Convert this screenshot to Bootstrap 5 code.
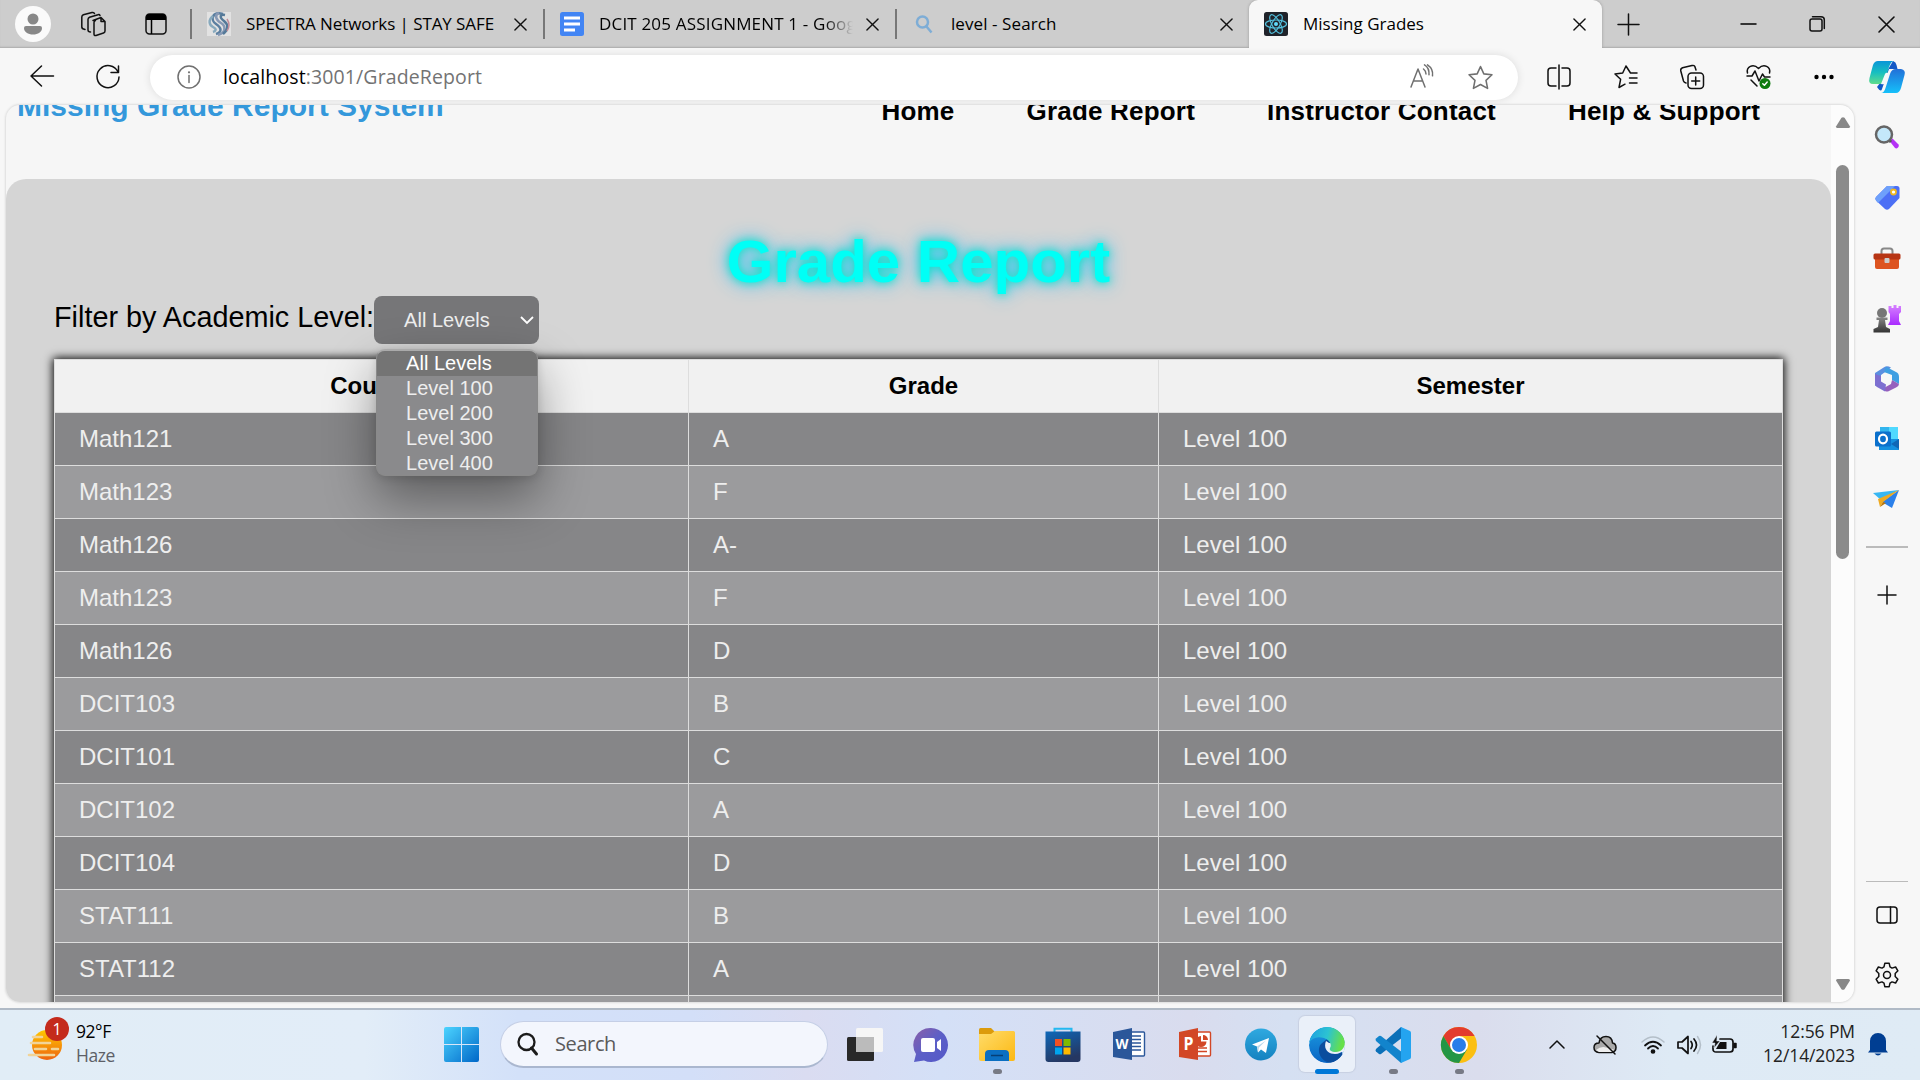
<!DOCTYPE html>
<html lang="en">
<head>
<meta charset="utf-8">
<title>Missing Grades</title>
<link href="https://cdn.jsdelivr.net/npm/bootstrap@5.3.0/dist/css/bootstrap.min.css" rel="stylesheet">
<style>
body{width:1920px;height:1080px;overflow:hidden;background:#f7f7f7;font-family:"Open Sans","Noto Sans",sans-serif;color:#000}
svg{display:block;flex:none;overflow:visible}
.ln{fill:none;stroke:#111;stroke-width:1.5;stroke-linecap:round;stroke-linejoin:round}
.g{stroke:#707070}
.tabstrip{height:48px;background:#cdcdcd;box-shadow:inset 0 -2px 2px -1px #aaa}
.avatar{width:36px;height:36px;margin:0 30px 0 15px;background:#fafafa}
.sep{width:2px;height:30px;background:#777;flex:none}
.tab{height:48px;font-size:17px;white-space:nowrap}
.tab svg:first-child{margin:0 15px 0 15px}
.tab .cap{flex:1;overflow:hidden;line-height:26px;margin-top:-1px}
.t1{width:351px;letter-spacing:-.08px}.t2{width:350px;letter-spacing:.18px}.t3{width:352px;letter-spacing:.08px}
.t4{width:353px;background:#f7f7f7;border-radius:9px 9px 0 0;letter-spacing:0;box-shadow:0 0 3px #999;clip-path:inset(0 -4px 0 -4px)}
.t1>svg:last-child,.t2>svg:last-child{margin-right:16px}.t3>svg:last-child,.t4>svg:last-child{margin-right:16px}
.fade-end{-webkit-mask-image:linear-gradient(90deg,#000 225px,transparent 254px);mask-image:linear-gradient(90deg,#000 225px,transparent 254px)}
.toolbar{height:57px}
.omni{width:1368px;height:45px;margin-top:1px;background:#fff;box-shadow:0 0 8px #0000001c;font-size:19.5px}
.omni .url{letter-spacing:.12px;margin-left:22px;flex:1;color:#737373;line-height:30px}
.view{width:1848px;height:898px;border-radius:14px;box-shadow:0 0 2px 1px #ddd;background:#f6f6f6;font-family:"Liberation Sans",Arial,sans-serif}
.doc{width:1825px;overflow:hidden}
.head{height:114px;margin-top:-40px;padding:0 71px 0 11px}
.brandname{font-size:30px;line-height:34px;color:#3498db;padding-top:24px;font-weight:700}
.menu{padding-top:32px;font-size:26px;line-height:28px;font-weight:700;letter-spacing:.2px;gap:72px}
.panel{background:#d5d5d5;border-radius:20px 20px 0 0;padding:48px 48px 0;height:900px}
.glow{font-size:60px;line-height:68px;font-weight:700;color:#00fff6;text-shadow:0 0 10px #00e6c4,0 0 20px #18b8ff;margin:0;padding-top:1px;margin-bottom:-1px}
.lvl-label{font-size:28.8px;line-height:33px;margin-top:-4px}
.picker{width:165px;height:48px;margin-top:1px;background:#767678;border-radius:8px;color:#eee;font-size:20px;padding:0 5px 0 30px;position:relative}
.drop{position:absolute;left:2px;top:53px;width:162px;height:127px;background:#8a8a8c;border:1px solid #8a8a8a;border-top:2px solid #aaa;border-radius:9px;box-shadow:0 22px 50px #0006,0 2px 8px #0002;overflow:hidden;z-index:3}
.drop div{line-height:25px;height:25px;padding-left:29px;color:#eee}
.drop .on{background:#747474;color:#fff}
.gr{width:1729px;margin-top:15px;table-layout:fixed;border-collapse:collapse;box-shadow:0 0 9px 1px #000;font-size:24px;line-height:28px;color:#eee}
.gr td,.gr th{height:53px;padding:0 24px;border:1px solid #ddd}
.gr th{background:#f1f1f1;color:#000;text-align:center}
.gr td{background:#868688}
.gr tr:nth-child(even) td{background:#9b9b9d}
.sbar{width:23px;background:#fcfcfc;border-radius:0 14px 14px 0}
.thumb{width:13px;height:394px;margin-top:37px;background:#8b8b8b;border-radius:7px}
.side{width:65px;padding-top:15px}
.side>svg{margin-bottom:24.2px}
.rule{width:42px;height:2px;background:#bbb;flex:none}
.taskbar{height:72px;border-top:2px solid #b0bac6;padding-bottom:1px;background:linear-gradient(90deg,#e1edf6 0,#e2edf8 19%,#d3e1f9 27%,#d3dff8 36%,#dadcf1 42%,#d4e0f7 49%,#d9dcee 62%,#d5e0f2 67%,#dadded 77%,#deeaf5 87%,#dfebf5 100%);font-size:17.5px;line-height:24px}
.find{width:328px;height:47px;background:#f3f6fd;border:1px solid #c5cfe6;border-bottom:2px solid #aab7cf;padding-left:15px;font-size:20px;color:#5a5a5a;letter-spacing:-.4px}
.app{width:66px;height:70px;padding-top:17px;position:relative}
.app i{position:absolute;left:28.5px;top:59px;width:9px;height:5px;border-radius:3px;background:#777a85}
.app.cur::before{content:"";position:absolute;left:5px;top:6px;width:56px;height:56px;border-radius:6px;background:#eaf0f9;box-shadow:0 0 1px 1px #c8d0e2}
.app.cur i{left:21px;width:24px;background:#0078d7}
.app svg{position:relative}
.bubble{position:absolute;left:45px;top:7px;width:24px;height:24px;background:#c42b1c;color:#fff;font-size:16px;line-height:24px}
</style>
<script src="https://cdn.jsdelivr.net/npm/bootstrap@5.3.0/dist/js/bootstrap.bundle.min.js"></script>
</head>
<body class="d-flex flex-column">
<svg width="0" height="0" class="position-absolute">
<defs>
<symbol id="x" viewBox="0 0 14 14"><path class="ln" d="M1 1 13 13M13 1 1 13" /></symbol>
<linearGradient id="blue" x2="1" y2="1"><stop stop-color="#4cd4ff"/><stop offset="1" stop-color="#0067c8"/></linearGradient>
<linearGradient id="purp" x2="1" y2="1"><stop stop-color="#8c5fa8"/><stop offset=".5" stop-color="#5b5fc7"/><stop offset="1" stop-color="#5558c8"/></linearGradient>
<linearGradient id="mag" x2="0" y2="1"><stop stop-color="#d681ff"/><stop offset="1" stop-color="#a92bff"/></linearGradient>
<linearGradient id="fold" x2="1" y2="1"><stop stop-color="#ffdc6a"/><stop offset="1" stop-color="#fcb813"/></linearGradient>
<linearGradient id="blk" x2="0" y2="1"><stop stop-color="#888"/><stop offset="1" stop-color="#333"/></linearGradient>
</defs>
</svg>

<header class="tabstrip d-flex align-items-center">
  <div class="avatar rounded-circle d-flex align-items-center justify-content-center"><svg width="18" height="22" viewBox="0 0 18 22" fill="#888"><circle cx="9" cy="6" r="5.5"/><path d="M2 13h14q2 0 2 2c0 4-4 6.500-9 6.500s-9-2.500-9-6.500q0-2 2-2z"/></svg></div>
  <svg width="25" height="24" viewBox="0 0 25 24" class="ln"><path d="M12 8.500 20 5.500 24 9.500V19q0 1.500-1.500 2L15 23.500q-2 .5-2-1.500V10.500q0-1.500 1.500-2zM20 5.500V9.500H24M9.500 20q-2.500 0-2.500-2V7.500Q7 6 8.500 5.300L17 2.700M4 17.500Q.8 17 .8 15V5q0-1.500 1.500-2.200L11 .6q2-.4 2.500 1M19 3.500q-.5-1.300-2-.8"/></svg>
  <svg width="22" height="22" viewBox="0 0 22 22" style="margin:0 23px 0 39px"><rect x="1" y="1" width="20" height="20" rx="3.500" class="ln" stroke-width="2"/><path d="M1 7V4.500Q1 1 4.500 1h13Q21 1 21 4.500V7z"/><path d="M6.500 7v14" stroke="#000" stroke-width="1.500"/></svg>
  <div class="sep"></div>
  <div class="tab t1 d-flex align-items-center"><svg width="24" height="24" viewBox="0 0 24 24"><rect width="24" height="24" fill="#e2e2e2"/><g fill="none" stroke-width="2.500"><path d="M16 2C5-1 3 8 9 12s6 8 0 10" stroke="#5b7fa0"/><path d="M12 1C7 3 9 8 14 11s5 10-3 12" stroke="#8799b5"/><path d="M18 3c-5-1-6 2-1 6s4 9-1 13" stroke="#557a99"/><path d="M6 4C1 8 2 13 6 15s3 4 0 5" stroke="#87a9bd"/><path d="M20 7q4 6 0 12" stroke="#c28d9a" stroke-width="1.500"/></g></svg><span class="cap">SPECTRA Networks | STAY SAFE</span><svg width="13" height="13"><use href="#x"/></svg></div>
  <div class="sep"></div>
  <div class="tab t2 d-flex align-items-center"><svg width="24" height="24" viewBox="0 0 24 24"><rect width="24" height="24" rx="2.500" fill="#4285f4"/><path d="M4 6h16M4 12h16M4 18h11" stroke="#fff" stroke-width="3"/></svg><span class="cap fade-end">DCIT 205 ASSIGNMENT 1 - Google Docs</span><svg width="13" height="13" class="ms-2"><use href="#x"/></svg></div>
  <div class="sep"></div>
  <div class="tab t3 d-flex align-items-center"><svg width="24" height="24" viewBox="0 0 24 24" fill="none" stroke="#7eadd6" stroke-width="2.500"><circle cx="10.500" cy="10" r="5.500"/><path d="m14.500 14.500 5 6"/></svg><span class="cap">level - Search</span><svg width="13" height="13"><use href="#x"/></svg></div>
  <div class="tab t4 d-flex align-items-center"><svg width="24" height="24" viewBox="0 0 24 24"><rect width="24" height="24" rx="2.500" fill="#20232a"/><g fill="none" stroke="#53c1de" stroke-width="1.200"><ellipse cx="12" cy="12" rx="10.500" ry="4"/><ellipse cx="12" cy="12" rx="10.500" ry="4" transform="rotate(60 12 12)"/><ellipse cx="12" cy="12" rx="10.500" ry="4" transform="rotate(120 12 12)"/></g><circle cx="12" cy="12" r="2" fill="#61dafb"/></svg><span class="cap">Missing Grades</span><svg width="13" height="13"><use href="#x"/></svg></div>
  <svg width="21" height="21" style="margin-left:16px" class="ln"><path d="M10.500 0v21M0 10.500h21"/></svg>
  <svg width="15" height="16" style="margin-left:102px" class="ln"><path d="M0 8h15" stroke="#000"/></svg>
  <svg width="16" height="16" viewBox="0 0 16 16" style="margin-left:53px" class="ln"><rect x="1" y="3" width="12" height="12" rx="2"/><path d="M3.500.7H12q3.300 0 3.300 3V12.500"/></svg>
  <svg width="15" height="15" viewBox="0 0 14 14" style="margin-left:54px"><path class="ln" d="M0 0 14 14M14 0 0 14"/></svg>
</header>

<div class="toolbar d-flex align-items-center">
  <svg width="24" height="22" viewBox="0 0 24 22" style="margin-left:30px;margin-bottom:2px" class="ln"><path d="M11.500 1 1 11 11.500 21M1 11H23.500"/></svg>
  <svg width="24" height="24" viewBox="0 0 24 24" style="margin:0 30px 0 42px" class="ln"><path d="M22 7A11 11 0 1 0 23 12M22.500 1v6.500H15"/></svg>
  <div class="omni rounded-pill d-flex align-items-center">
    <svg width="24" height="24" viewBox="0 0 24 24" style="margin-left:27px"><circle cx="12" cy="12" r="11" class="ln g"/><path d="M12 10.500V17.500" class="ln g"/><circle cx="12" cy="7.300" r="1.100" fill="#707070"/></svg>
    <span class="url"><span class="text-black">localhost</span>:3001/GradeReport</span>
    <svg width="24" height="24" viewBox="0 0 24 24" class="ln g" style="margin-bottom:2px"><path d="M1 23 8 5 15 23M3.500 17h9M14.500.8q5 3 4.500 10M13.500 5q2.500 2 2.500 5M17.500.8q6 4 5 11"/></svg>
    <svg width="25" height="25" viewBox="0 0 24 24" style="margin:0 25px 0 34px" class="ln g"><path d="m12 1.500 3.200 7 7.800.9-5.700 5.300 1.500 7.800L12 18.700l-6.800 3.800 1.500-7.800L1 9.400l7.800-.9z"/></svg>
  </div>
  <svg width="24" height="24" viewBox="0 0 24 24" style="margin-left:29px" class="ln"><path d="M9 3H4Q1 3 1 6V18q0 3 3 3H9M12 0V24M15 3h5q3 0 3 3V18q0 3-3 3H15"/></svg>
  <svg width="24" height="24" viewBox="0 0 24 24" style="margin-left:43px" class="ln"><path d="M23 8h-6.500L12 1 8.700 8 1 9l5.600 5.300L5 22.500l6-3.300M15.500 13H23M15.500 18H23"/></svg>
  <svg width="24" height="24" viewBox="0 0 24 24" style="margin-left:42px" class="ln"><path d="M6 18Q4 17.500 3.500 16L.8 6Q.3 3.500 2.500 2.700L12 .6q2.500-.6 3 1.500L16 5"/><rect x="8" y="8" width="15.500" height="15.500" rx="3.500"/><path d="M15.700 12v8M11.700 16h8"/></svg>
  <svg width="25" height="25" viewBox="0 0 25 25" style="margin-left:42px" class="ln"><path d="M1.500 9C0 3 7-1 12.500 4.500 18-1 25 3 23.500 9M1 12h5l3-5 4 10 3.500-7 2 3H24M5 16l6 6"/><circle cx="19" cy="19.500" r="5.500" fill="#0f7b0f" style="stroke:none"/><path d="m16.800 19.700 1.600 1.500 2.800-3.200" style="stroke:#fff"/></svg>
  <svg width="20" height="6" style="margin-left:43px"><circle cx="2.500" cy="3" r="2.200"/><circle cx="10" cy="3" r="2.200"/><circle cx="17.500" cy="3" r="2.200"/></svg>
  <svg width="36" height="32" viewBox="0 0 36 32" style="margin-left:35px"><defs><linearGradient id="c1" x2="0" y2="1"><stop stop-color="#0a95d8"/><stop offset=".5" stop-color="#17bfc0"/><stop offset="1" stop-color="#60dc8c"/></linearGradient><linearGradient id="c2" x2="0" y2="1"><stop stop-color="#2270d8"/><stop offset="1" stop-color="#15c0fa"/></linearGradient></defs><path d="M24 0q3 1 3.500 4l1 4H20l-7 20Q12 32 8 26l3-4z" fill="#1258c6"/><path d="M9 0H25q-3 0-5 6l-4 13q-1.500 4-5 4H4q-5 0-3.500-6L4 4Q5.500 0 9 0z" fill="url(#c1)"/><path d="M27 8h5q5 1 3.500 6L32 27q-1.500 5-5 5H12q3 0 4.500-5L21 13q1.500-5 6-5z" fill="url(#c2)"/><path d="M19.500 12 16 22q-1 2-4 1l4-10q1-2 3.500-1z" fill="#f4f8fa"/></svg>
</div>

<div class="d-flex" style="height:903px">
  <main class="view d-flex overflow-hidden" style="margin-left:6px;height:897px">
    <div class="doc">
      <div class="head d-flex justify-content-between align-items-start">
        <div class="brandname">Missing Grade Report System</div>
        <nav class="menu d-flex"><span>Home</span><span>Grade Report</span><span>Instructor Contact</span><span>Help &amp; Support</span></nav>
      </div>
      <section class="panel">
        <h1 class="glow text-center">Grade Report</h1>
        <div class="d-flex align-items-center">
          <label class="lvl-label">Filter by Academic Level:</label>
          <div class="picker d-flex align-items-center justify-content-between"><span>All Levels</span><svg width="14" height="8" viewBox="0 0 14 8"><path d="m1 1 6 6 6-6" fill="none" stroke="#fff" stroke-width="1.800"/></svg>
            <div class="drop"><div class="on">All Levels</div><div>Level 100</div><div>Level 200</div><div>Level 300</div><div>Level 400</div></div>
          </div>
        </div>
        <table class="gr">
          <colgroup><col style="width:634px"><col style="width:470px"><col></colgroup>
          <thead><tr><th>Course</th><th>Grade</th><th>Semester</th></tr></thead>
          <tbody>
          <tr><td>Math121</td><td>A</td><td>Level 100</td></tr>
          <tr><td>Math123</td><td>F</td><td>Level 100</td></tr>
          <tr><td>Math126</td><td>A-</td><td>Level 100</td></tr>
          <tr><td>Math123</td><td>F</td><td>Level 100</td></tr>
          <tr><td>Math126</td><td>D</td><td>Level 100</td></tr>
          <tr><td>DCIT103</td><td>B</td><td>Level 100</td></tr>
          <tr><td>DCIT101</td><td>C</td><td>Level 100</td></tr>
          <tr><td>DCIT102</td><td>A</td><td>Level 100</td></tr>
          <tr><td>DCIT104</td><td>D</td><td>Level 100</td></tr>
          <tr><td>STAT111</td><td>B</td><td>Level 100</td></tr>
          <tr><td>STAT112</td><td>A</td><td>Level 100</td></tr>
          <tr><td></td><td></td><td></td></tr>
          </tbody>
        </table>
      </section>
    </div>
    <div class="sbar d-flex flex-column align-items-center">
      <svg width="14" height="11" style="margin-top:12px"><path d="M5.500.8q1.500-1.200 3 0L14 9.500q0 1.500-1.500 1.500h-11Q0 11 0 9.500z" fill="#888"/></svg>
      <div class="thumb"></div>
      <svg width="14" height="11" class="mt-auto" style="margin-bottom:12px"><path d="M5.500 10.200q1.500 1.200 3 0L14 1.500Q14 0 12.500 0h-11Q0 0 0 1.500z" fill="#888"/></svg>
    </div>
  </main>
  <aside class="side d-flex flex-column align-items-center">
    <svg width="26" height="36" viewBox="-1 -5 26 36"><path d="m14.500 16 3-2.500 6 6q1 1.500-.5 3t-3 .5z" fill="#b432f5"/><path d="m13 14 3 3" stroke="#555" stroke-width="3"/><circle cx="9" cy="9.500" r="8" fill="#c4e8fa" stroke="#666" stroke-width="2.500"/></svg>
    <svg width="26" height="36" viewBox="-1 -6 26 36"><path d="M12 0h10q2.500 0 2.500 2.500V12L14 23q-2 1.500-4 0l-9-8.500q-1.500-2 0-3.500z" fill="#4c6ff5"/><path d="M12 0h8L3 17 1 14.500q-1.500-2 0-3.500z" fill="#6ea0fb"/><circle cx="18.500" cy="6" r="2.500" fill="#fff" stroke="#f2b81e" stroke-width="1.800"/></svg>
    <svg width="28" height="36" viewBox="0 -8 28 36"><path d="M8.500 6V3q0-2.500 2.500-2.500h6q2.500 0 2.500 2.500v3" fill="none" stroke="#888" stroke-width="2"/><rect x="2" y="9" width="24" height="12" rx="2" fill="#dd5420"/><rect x=".5" y="5.500" width="27" height="6" rx="1.500" fill="#b73514"/><rect x="11.500" y="10" width="5" height="5" rx="1" fill="#ccc"/></svg>
    <svg width="28" height="36" viewBox="0 -4 28 36"><path d="M15.500 1h3v2h2V0h3v3h2V1H28v6l-2 2v7l2 4H15l2-4V9l-1.500-2z" fill="url(#mag)"/><circle cx="9" cy="8" r="5" fill="#777"/><path d="M3.500 12.500h11V15H12l1 7 4 2v3.500H.5V24L5 22l1-7H3.500z" fill="url(#blk)"/></svg>
    <svg width="26" height="36" viewBox="0 -5 26 36"><path d="M10.500 1 1 7v13l6-3V9l7-5 3-2.500Q13-.7 10.500 1z" fill="#5b8fe0"/><path d="M12 .7 22 6q3 1 3 5v7l-7-4V9L10 6z" fill="#3f9fe2"/><path d="m18 14 7 4q0 2-3 3.500L15 25q-2 1-4 0l-3-2 9-5z" fill="#9560bd"/><path d="M1 8v10q0 2 2 3l8 4.500 1-7-5-3V10z" fill="#7d6fd0"/><circle cx="13" cy="13" r="4.500" fill="#f7f7f7"/></svg>
    <svg width="26" height="36" viewBox="-1 -6 26 36"><rect x="5" y="0" width="18" height="15" fill="#32b5ee"/><path d="M14 0h9v13h-9z" fill="#50d9ff"/><path d="M4 12h20v11H4z" fill="#1490df"/><path d="m24 12-8 5 8 5z" fill="#1066b5"/><rect y="4.500" width="16" height="15" rx="1.500" fill="#0a70cc"/><ellipse cx="8" cy="12" rx="4" ry="4.300" fill="none" stroke="#fff" stroke-width="2.200"/></svg>
    <svg width="27" height="36" viewBox="0 -9 27 36"><path d="m0 3 26-3-18 10z" fill="#38b7f2"/><path d="M26 0 9 12l10 6z" fill="#2b80ea"/><path d="m5 9 21-9L10 12l-3 5z" fill="#efaa20"/><path d="m10 12-3 5 6-4z" fill="#b97507"/></svg>
    <div class="rule" style="margin-top:4.5px"></div>
    <svg width="18" height="18" class="ln" style="margin-top:38px"><path d="M9 0V18M0 9H18"/></svg>
    <div class="rule" style="margin-top:253px;height:1px"></div>
    <svg width="22" height="18" viewBox="0 0 22 18" class="ln" style="margin:24px 0 0"><rect x="1" y="1" width="20" height="16" rx="3"/><path d="M14.500 1v16"/></svg>
    <svg width="26" height="26" viewBox="0 0 26 26" class="ln" style="margin:38px 0 0"><circle cx="13" cy="13" r="3.500"/><path d="M10.800 1.300h4.400l.8 3.600 2 1.200 3.600-1.100 2.300 3.800-2.700 2.700v3l2.700 2.700-2.300 3.800L18 19.900l-2 1.200-.8 3.600h-4.400L10 21.100l-2-1.200L4.400 21l-2.300-3.800 2.700-2.700v-3L2.100 8.800 4.400 5 8 6.100l2-1.200z"/></svg>
  </aside>
</div>

<footer class="taskbar d-flex align-items-center position-relative">
  <svg width="36" height="34" viewBox="0 0 36 34" style="margin:0 12px 0 28px"><defs><linearGradient id="sun" x2="0" y2="1"><stop stop-color="#ffc800"/><stop offset="1" stop-color="#ee6410"/></linearGradient></defs><circle cx="19" cy="17" r="15" fill="url(#sun)"/><path d="M5 9h9M3 15h19M7 21h11M24 21h6M1 27h25" stroke="#f1d498" stroke-width="2.600" stroke-linecap="round"/></svg>
  <span class="bubble rounded-circle text-center">1</span>
  <div style="width:368px;margin-top:-4px;letter-spacing:-.45px">92°F<br><span style="color:#5d6067">Haze</span></div>
  <svg width="35" height="35" viewBox="0 0 35 35" fill="url(#blue)"><path d="M0 2Q0 0 2 0H17V17H0zM18 0H33Q35 0 35 2V17H18zM0 18H17V35H2Q0 35 0 33zM18 18H35V33Q35 35 33 35H18z"/></svg>
  <div class="find rounded-pill d-flex align-items-center" style="margin:0 4px 0 21px"><svg width="22" height="24" viewBox="0 0 22 24" style="margin-right:17px"><circle cx="10.500" cy="10" r="8" fill="none" stroke="#1b1b1b" stroke-width="2.300"/><path d="m15.500 16 5 6" stroke="#1b1b1b" stroke-width="3" stroke-linecap="round"/></svg>Search</div>
  <div class="d-flex">
    <div class="app d-flex justify-content-center"><svg width="36" height="36" viewBox="0 0 36 36"><rect y="10" width="27" height="24" rx="1.500" fill="#292929"/><rect x="9" y="1" width="27" height="24" rx="1.500" fill="#f6f6f6"/><path d="M9 10h18v15H9z" fill="#bbb"/></svg></div>
    <div class="app d-flex justify-content-center"><svg width="36" height="36" viewBox="0 0 36 36"><path d="M18 1a17 17 0 1 1-7 32.500L1 35l2-8A17 17 0 0 1 18 1z" fill="url(#purp)"/><rect x="8" y="11" width="14" height="14" rx="2" fill="#fff"/><path d="m24 15 4-3v12l-4-3z" fill="#fff"/></svg></div>
    <div class="app d-flex justify-content-center"><svg width="36" height="36" viewBox="0 0 36 36"><path d="M0 10V2.500Q0 1 1.500 1H12l4 4v5z" fill="#dc9b0b"/><path d="M0 7h12l4-3H34.500Q36 4 36 5.500V32q0 2-2 2H2q-2 0-2-2z" fill="url(#fold)"/><path d="M6 34V27q0-4 4-4H26q4 0 4 4v7z" fill="#0b6fc2"/><path d="M12 28.500h12" stroke="#063f75" stroke-width="1.500"/></svg><i></i></div>
    <div class="app d-flex justify-content-center"><svg width="36" height="36" viewBox="0 0 36 36"><defs><linearGradient id="st" x2=".4" y2="1"><stop stop-color="#0e68b9"/><stop offset="1" stop-color="#253762"/></linearGradient></defs><path d="M9.500 7V1.800h17V7" fill="none" stroke="#24b8f0" stroke-width="2"/><path d="M.5 4.500h35V32q0 3-3 3h-29q-3 0-3-3z" fill="url(#st)"/><path d="M10 12h7v7h-7z" fill="#f25022"/><path d="M18.500 12h7v7h-7z" fill="#7fba00"/><path d="M10 20.500h7v7h-7z" fill="#00a4ef"/><path d="M18.500 20.500h7v7h-7z" fill="#ffb900"/></svg></div>
    <div class="app d-flex justify-content-center"><svg width="34" height="34" viewBox="0 0 34 34"><rect x="14" y="5" width="18.500" height="24" rx="1" fill="#fff" stroke="#2b579a" stroke-width="1.400"/><path d="M18 9h11M18 12.500h11M18 16h11M18 19.500h11M18 23h11" stroke="#2b579a" stroke-width="1.600"/><path d="m1 5 19-4v32L1 30z" fill="#2b579a"/><text x="3.500" y="22" font-size="15" font-weight="700" fill="#fff" textLength="13" lengthAdjust="spacingAndGlyphs">W</text></svg></div>
    <div class="app d-flex justify-content-center"><svg width="34" height="34" viewBox="0 0 34 34"><rect x="14" y="5" width="18.500" height="24" rx="1" fill="#fff" stroke="#d24726" stroke-width="1.400"/><path d="M20 21h9M20 24.500h9" stroke="#d24726" stroke-width="1.600"/><path d="M23 9a5.500 5.500 0 1 0 5.500 5.500H23z" fill="#d24726"/><path d="M25 8a5 5 0 0 1 5 5H25z" fill="#d24726"/><path d="m1 5 19-4v32L1 30z" fill="#d24726"/><text x="5.500" y="23" font-size="18" font-weight="700" fill="#fff" textLength="10" lengthAdjust="spacingAndGlyphs">P</text></svg></div>
    <div class="app d-flex justify-content-center"><svg width="34" height="36" viewBox="0 0 34 36"><defs><linearGradient id="tg" x2="0" y2="1"><stop stop-color="#2fa9e0"/><stop offset="1" stop-color="#1582c0"/></linearGradient></defs><circle cx="17" cy="17.500" r="16" fill="url(#tg)"/><path d="M8 17.500 25 11l-3 15-5-3.500-3 3-1-6z" fill="#fff"/><path d="m13 19.500 9-6-7 7-1 5z" fill="#b8d8ec"/></svg></div>
    <div class="app cur d-flex justify-content-center"><svg width="36" height="36" viewBox="0 0 36 36"><defs><linearGradient id="e1" x2="1" y2=".2"><stop stop-color="#1b9de2"/><stop offset=".55" stop-color="#2cc3d2"/><stop offset="1" stop-color="#66e04a"/></linearGradient><linearGradient id="e2" x2="0" y2="1"><stop stop-color="#1c9be0"/><stop offset="1" stop-color="#0964c4"/></linearGradient><clipPath id="disc"><circle cx="18" cy="18" r="18"/></clipPath></defs><g clip-path="url(#disc)"><circle cx="18" cy="18" r="18" fill="url(#e2)"/><path d="M12 17c-5 6-1 19 12 19 6 0 9-6 10-9l-8-9-8-6z" fill="#0b4d9e"/><path d="M17 14c-3 8 2 13 9 13 4 0 6-2 7-2 1 0 0 1 0 2l5-2V16H20z" fill="#eaf0f9"/><path d="M0 14C3 4 10 0 18 0c12 0 18 8 18 15 0 6-4 10-9 10-5 0-7-2-6-4 2-3 0-8-6-10C8 9 3 11 0 16z" fill="url(#e1)"/></g></svg><i></i></div>
    <div class="app d-flex justify-content-center"><svg width="36" height="36" viewBox="0 0 36 36"><path d="m26 0 9 4q1 .5 1 2V30q0 1.500-1 2l-9 4z" fill="#24a4f0"/><path d="M26 0 1 22q-1 1.500 0 2.500l3 2.500q1 .5 2 0L28 10z" fill="#0b70b8"/><path d="M26 36 1 14q-1-1.500 0-2.500L4 9q1-.5 2 0L28 26z" fill="#1284cc"/><path d="m26 0 2 2v32l-2 2z" fill="#24a4f0"/></svg><i></i></div>
    <div class="app d-flex justify-content-center"><svg width="36" height="36" viewBox="0 0 36 36"><circle cx="18" cy="18" r="18" fill="#fbbf12"/><path d="M2.400 9A18 18 0 0 1 33.600 9H18l-8 13.500z" fill="#e33b2e"/><path d="M2.400 9A18 18 0 0 0 18 36l8-13.500H10.200z" fill="#239645"/><circle cx="18" cy="18" r="9" fill="#fff"/><circle cx="18" cy="18" r="7" fill="#2a7de9"/></svg><i></i></div>
  </div>
  <svg width="16" height="9" viewBox="0 0 16 9" class="ln" style="margin-left:57px"><path d="m1 8 7-7 7 7"/></svg>
  <svg width="24" height="20" viewBox="0 0 24 20" class="ln" style="margin-left:28px"><path d="M6 17.500Q1 17 1 12.500T6 8q1-6.500 7-6.500T19.500 8Q23 8.500 23 12.500T19 17.500z" fill="#aaa" style="fill:#aaa"/><path d="M3 15q5-4 10-2.500t8 2l-2 2.500H6z" style="fill:#eee;stroke:none"/><path d="M4 1 22 19"/></svg>
  <svg width="24" height="20" viewBox="0 0 24 20" class="ln" style="margin-left:24px"><path d="M1 7q11-10 22 0" stroke="#b4bfc9"/><path d="M4 10.500q8-7.500 16 0M7 13.500q5-5 10 0" stroke-width="1.800"/><circle cx="12" cy="16.500" r="1.600" fill="#111"/></svg>
  <svg width="25" height="20" viewBox="0 0 25 20" class="ln" style="margin-left:12px"><path d="M1 7h4l6-5.500v17L5 13H1zM14 6.500q2.500 3.500 0 7M17 4q5 6 0 12" stroke-width="1.700"/><path d="M20.500 1.500q6 8.500 0 17" stroke="#b4bfc9"/></svg>
  <svg width="25" height="20" viewBox="0 0 25 20" class="ln" style="margin-left:10px"><path d="M8 4h10q3 0 3 3v7q0 3-3 3H4q-3 0-3-3v-3" stroke-width="1.700"/><path d="M8 7h6.500v7H4z" fill="#111" stroke="none"/><path d="M22 8.500h2v4h-2z" fill="#111"/><path d="M5 0 0 8h3l-1 5 6-7H5z" fill="#111" stroke="#e0eaf4" stroke-width=".5"/></svg>
  <div class="text-end" style="width:118px;margin:-4px 13px 0 0;font-size:17.5px;letter-spacing:-.1px;color:#222">12:56 PM<br>12/14/2023</div>
  <svg width="20" height="24" viewBox="0 0 20 24" fill="#003e92"><path d="M2 17V8a8 8 0 0 1 16 0v9l2 2.500H0zM6.500 20.500h7q-3.500 4-7 0z"/></svg>
</footer>
</body>
</html>
